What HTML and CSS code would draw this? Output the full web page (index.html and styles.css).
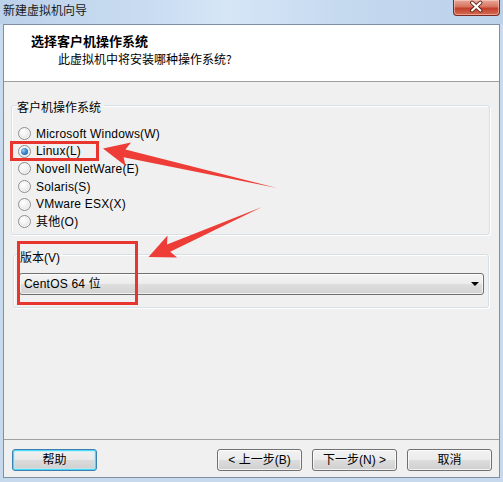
FILE: index.html
```html
<!DOCTYPE html>
<html lang="zh-CN">
<head>
<meta charset="utf-8">
<title>新建虚拟机向导</title>
<link rel="stylesheet" href="styles.css">
</head>
<body>
<div class="window">
  <div class="titlebar">
    <span class="title">新建虚拟机向导</span>
    <div class="close">
      <svg width="47" height="16" viewBox="0 0 47 16">
        <path d="M19.5 3.5 L28 11.5 M28 3.5 L19.5 11.5" stroke="#5a1a10" stroke-width="4" stroke-linecap="round"/>
        <path d="M19.5 3.5 L28 11.5 M28 3.5 L19.5 11.5" stroke="#ffffff" stroke-width="2.2" stroke-linecap="round"/>
      </svg>
    </div>
  </div>
  <div class="client">
    <div class="header">
      <div class="h-title">选择客户机操作系统</div>
      <div class="h-sub">此虚拟机中将安装哪种操作系统?</div>
    </div>
    <div class="content">
      <fieldset class="group group-os">
        <legend>客户机操作系统</legend>
        <div class="radio-row"><span class="radio"></span><span class="label">Microsoft Windows(W)</span></div>
        <div class="radio-row"><span class="radio checked"></span><span class="label">Linux(L)</span></div>
        <div class="radio-row"><span class="radio"></span><span class="label">Novell NetWare(E)</span></div>
        <div class="radio-row"><span class="radio"></span><span class="label">Solaris(S)</span></div>
        <div class="radio-row"><span class="radio"></span><span class="label">VMware ESX(X)</span></div>
        <div class="radio-row"><span class="radio"></span><span class="label">其他(O)</span></div>
      </fieldset>
      <fieldset class="group group-ver">
        <legend>版本(V)</legend>
        <div class="select">
          <span class="select-text">CentOS 64 位</span>
          <span class="select-arrow"></span>
        </div>
      </fieldset>
    </div>
    <div class="footer">
      <div class="btn btn-default">帮助</div>
      <div class="btn-group">
        <div class="btn">&lt; 上一步(B)</div>
        <div class="btn">下一步(N) &gt;</div>
        <div class="btn">取消</div>
      </div>
    </div>
  </div>

  <div class="mark mark-linux"></div>
  <div class="mark mark-version"></div>
  <svg class="arrows" width="503" height="482" viewBox="0 0 503 482">
    <polygon points="103,148.5 131,142.6 125.4,149.5 277,188 123.6,157.3 125.7,166" fill="#ee3c36"/>
    <polygon points="148.5,257 167.5,235.5 167,244.4 262,207 170.2,251.8 177.1,257.5" fill="#ee3c36"/>
  </svg>
</div>
</body>
</html>
```

FILE: styles.css
```css
* { box-sizing: border-box; }

html, body {
  margin: 0;
  padding: 0;
}

body {
  font-family: "Liberation Sans", "Noto Sans CJK SC", sans-serif;
  font-size: 12px;
  color: #000;
  background: #c8daee;
}

.window {
  position: relative;
  width: 503px;
  height: 482px;
  display: flex;
  flex-direction: column;
  background: linear-gradient(to bottom, #bdd2ea 0px, #c9dbef 24px, #c7d9ed 100%);
  overflow: hidden;
}

.titlebar {
  height: 24px;
  flex: none;
  display: flex;
  align-items: flex-start;
  background: linear-gradient(to right, #bcd1ea 0%, #c9dcf1 30%, #d6e6f7 45%, #c4d8ee 70%, #bcd2eb 100%);
}

.title {
  margin: 3px 0 0 3px;
  line-height: 14px;
  font-family: "Noto Sans CJK SC", sans-serif;
  font-size: 12px;
  color: #1a1a1a;
}

.close {
  margin-left: auto;
  margin-right: 3px;
  width: 47px;
  height: 16px;
  border: 1px solid #7a2a20;
  border-top: none;
  border-radius: 0 0 4px 4px;
  background: linear-gradient(to bottom, #e9a99b 0%, #d7735f 45%, #c2402b 55%, #d56b54 100%);
  box-shadow: inset 0 0 0 1px rgba(255, 220, 210, 0.5);
  display: flex;
}

.close svg { display: block; margin: -1px 0 0 -1px; }

.client {
  flex: 1;
  margin: 0 3px 4px 3px;
  border: 1px solid #7f8fa3;
  display: flex;
  flex-direction: column;
  background: #f0f0f0;
}

.header {
  height: 57px;
  flex: none;
  background: #fff;
  border-bottom: 1px solid #a0a0a0;
  padding: 8px 0 0 27px;
}

.h-title {
  font-family: "Noto Sans CJK SC", sans-serif;
  font-weight: bold;
  font-size: 13px;
  line-height: 16px;
}

.h-sub {
  margin: 2px 0 0 27px;
  font-family: "Noto Sans CJK SC", sans-serif;
  font-size: 12px;
  line-height: 16px;
}

.content {
  flex: 1;
  padding-top: 13px;
}

.group {
  margin: 0;
  border: 1px solid #d5dfe5;
  border-radius: 3px;
  box-shadow: inset 1px 1px 0 #fff, 1px 1px 0 #fff;
  min-width: 0;
}

.group legend {
  padding: 6px 3px 0 0;
  line-height: 14px;
  font-size: 12px;
}

.group-os {
  margin: 0 9px 0 7px;
  padding: 10px 4px 3px 5px;
}

.group-ver {
  margin: 10px 10px 0 9px;
  padding: 8px 4px 12px 5px;
}

.group-ver legend { margin-left: 1px; }

.radio-row {
  height: 17.6px;
  display: flex;
  align-items: center;
  padding-left: 1px;
}

.radio {
  width: 13px;
  height: 13px;
  border-radius: 50%;
  border: 1px solid #8f8f8f;
  background: radial-gradient(circle at 40% 35%, #ffffff 0%, #f2f2f2 40%, #d4d4d4 100%);
  box-shadow: inset 0 0 0 1px #f6f6f6;
  flex: none;
  display: flex;
  align-items: center;
  justify-content: center;
}

.radio.checked::after {
  content: "";
  width: 7px;
  height: 7px;
  border-radius: 50%;
  background: radial-gradient(circle at 35% 35%, #9ad0f5 0%, #3a8bd0 45%, #0e4d8f 100%);
}

.label {
  margin-left: 5px;
  line-height: 14px;
  letter-spacing: 0.2px;
}

.select {
  height: 22px;
  border: 1px solid #707070;
  border-radius: 3px;
  background: linear-gradient(to bottom, #f4f4f4 0%, #ececec 50%, #dedede 51%, #d3d3d3 100%);
  box-shadow: inset 0 0 0 1px rgba(255, 255, 255, 0.7);
  display: flex;
  align-items: center;
  padding: 0 4px 0 4px;
}

.select-text {
  flex: 1;
  line-height: 14px;
  letter-spacing: 0.2px;
}

.select-arrow {
  width: 0;
  height: 0;
  border-left: 4px solid transparent;
  border-right: 4px solid transparent;
  border-top: 4px solid #000;
}

.footer {
  height: 38px;
  flex: none;
  border-top: 1px solid #a0a0a0;
  display: flex;
  align-items: flex-start;
  justify-content: space-between;
  padding: 9px 7px 0 8px;
}

.btn-group {
  display: flex;
  gap: 10px;
}

.btn {
  width: 85px;
  height: 22px;
  border: 1px solid #707070;
  border-radius: 3px;
  background: linear-gradient(to bottom, #f2f2f2 0%, #ebebeb 50%, #dddddd 51%, #cfcfcf 100%);
  box-shadow: inset 0 0 0 1px rgba(255, 255, 255, 0.75);
  display: flex;
  align-items: center;
  justify-content: center;
  line-height: 14px;
  font-size: 12px;
}

.btn-default {
  border-color: #3c7fb1;
  box-shadow: inset 0 0 0 1px #48d8f8, inset 0 0 0 2px rgba(180, 235, 250, 0.6);
  background: linear-gradient(to bottom, #f0f0f0 0%, #e9e9e9 50%, #dbdbdb 51%, #cfcfcf 100%);
}

.mark {
  position: absolute;
  border: 3px solid #e8362f;
  pointer-events: none;
}

.mark-linux {
  left: 10px;
  top: 141px;
  width: 89px;
  height: 20px;
}

.mark-version {
  left: 17px;
  top: 241px;
  width: 121px;
  height: 64px;
}

.arrows {
  position: absolute;
  left: 0;
  top: 0;
  pointer-events: none;
}
```
